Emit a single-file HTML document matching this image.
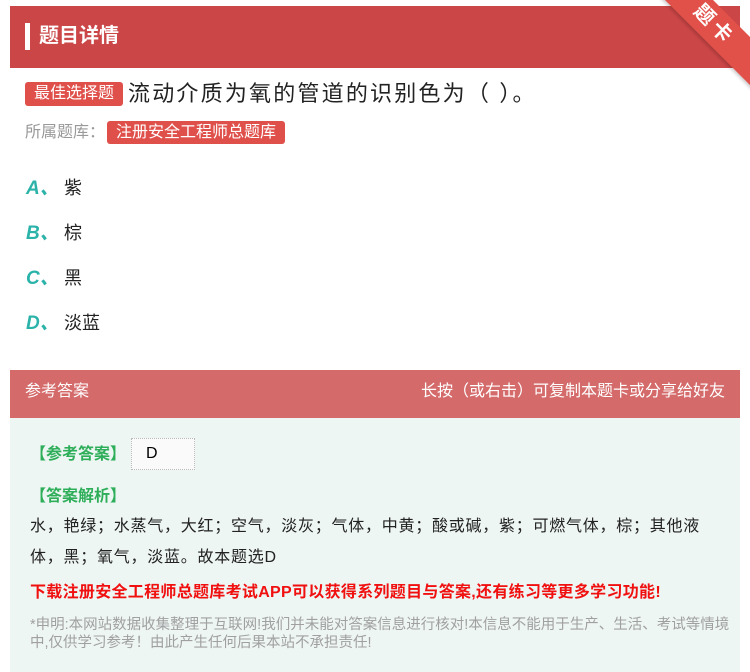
<!DOCTYPE html>
<html><head><meta charset="utf-8"><style>
*{margin:0;padding:0;box-sizing:border-box}
body{width:750px;height:672px;background:#fff;font-family:"Liberation Sans","Noto Sans CJK SC",sans-serif;position:relative;overflow:hidden}
.hd{position:absolute;left:10px;top:6px;width:730px;height:62px;background:#cb4647}
.hd .bar{position:absolute;left:15px;top:17px;width:5px;height:27px;background:#fff}
.hd .t{position:absolute;left:29px;top:16px;color:#fff;font-size:20px;font-weight:bold;line-height:28px}
.rib{position:absolute;right:-44px;top:8px;width:160px;height:34px;background:#e2504a;transform:rotate(45deg);color:#fff;font-size:20px;text-align:center;line-height:34px;font-weight:bold;letter-spacing:4px;box-shadow:0 2px 3px rgba(0,0,0,.2)}
.tag{display:inline-block;background:#e0504b;color:#fff;border-radius:3px;font-size:16px;padding:0 9px;line-height:24px}
.q{position:absolute;left:25px;top:79px;font-size:22px;color:#222;line-height:30px;letter-spacing:2.2px}
.q .tag{vertical-align:3px;margin-right:5px;letter-spacing:0}
.lib{position:absolute;left:25px;top:121px;font-size:16px;color:#999;line-height:24px}
.lib .tag{line-height:23px;margin-left:2px}
.op{position:absolute;left:26px;font-size:18px;color:#222;line-height:24px}
.op b{color:#2bb3aa;font-style:italic;font-size:19px;display:inline-block;width:38px}
.ah{position:absolute;left:10px;top:370px;width:730px;height:48px;background:#d46a6a;color:#fff;font-size:16px;line-height:44px;padding:0 15px}
.ah span{float:right}
.ab{position:absolute;left:10px;top:418px;width:730px;height:254px;background:#eef6f4}
.g{color:#2fae5a;font-size:16px;font-weight:bold;position:absolute;left:20px}
.txt{position:absolute;left:20px;top:93px;width:684px;font-size:16px;color:#222;line-height:31px;letter-spacing:0.75px}
.red{position:absolute;left:20px;top:160px;font-size:16px;color:#f01010;font-weight:bold;letter-spacing:0.3px}
.dis{position:absolute;left:20px;top:198px;width:700px;font-size:14.5px;color:#a0a0a0;line-height:18px;letter-spacing:0}
.img{position:absolute;left:121px;top:20px;width:64px;height:32px;background:#fafafa;border:1px dotted #bbb;font-size:16px;padding-left:14px;line-height:30px}
</style></head><body>
<div class="hd"><div class="bar"></div><div class="t">题目详情</div></div>
<div class="rib">题卡</div>
<div class="q"><span class="tag">最佳选择题</span>流动介质为氧的管道的识别色为（ ）。</div>
<div class="lib">所属题库：<span class="tag">注册安全工程师总题库</span></div>
<div class="op" style="top:176px"><b>A、</b>紫</div>
<div class="op" style="top:221px"><b>B、</b>棕</div>
<div class="op" style="top:266px"><b>C、</b>黑</div>
<div class="op" style="top:311px"><b>D、</b>淡蓝</div>
<div class="ah">参考答案<span>长按（或右击）可复制本题卡或分享给好友</span></div>
<div class="ab">
<div class="g" style="top:22px">【参考答案】</div>
<div class="img">D</div>
<div class="g" style="top:64px">【答案解析】</div>
<div class="txt">水，艳绿；水蒸气，大红；空气，淡灰；气体，中黄；酸或碱，紫；可燃气体，棕；其他液体，黑；氧气，淡蓝。故本题选D</div>
<div class="red">下载注册安全工程师总题库考试APP可以获得系列题目与答案,还有练习等更多学习功能!</div>
<div class="dis">*申明:本网站数据收集整理于互联网!我们并未能对答案信息进行核对!本信息不能用于生产、生活、考试等情境中,仅供学习参考！由此产生任何后果本站不承担责任!</div>
</div>
</body></html>
